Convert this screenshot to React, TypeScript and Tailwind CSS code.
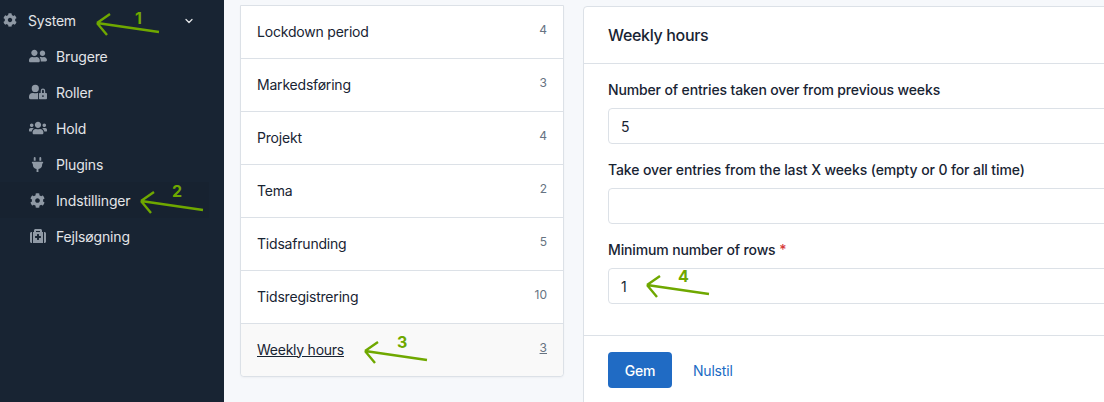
import React from "react";
import { FaCog, FaUserFriends, FaUserLock, FaUsers, FaPlug, FaMedkit } from "react-icons/fa";
import { ChevronDown } from "lucide-react";

function Arrow({ x, y, n, nx, ny }: { x: number; y: number; n: string; nx: number; ny: number }) {
  return (
    <>
      <svg className="absolute pointer-events-none" style={{ left: x, top: y }} width="68" height="30" viewBox="0 0 68 30" fill="none">
        <path d="M2 12 L64 21 M2 12 L15 3 M2 12 L12 24" stroke="#6fa800" strokeWidth="2.4" />
      </svg>
      <span className="absolute pointer-events-none text-[16px] leading-none font-bold text-[#6fa800]" style={{ left: nx, top: ny }}>{n}</span>
    </>
  );
}

const sub = [
  { label: "Brugere", Icon: FaUserFriends, size: 18 },
  { label: "Roller", Icon: FaUserLock, size: 18 },
  { label: "Hold", Icon: FaUsers, size: 18 },
  { label: "Plugins", Icon: FaPlug, size: 15 },
  { label: "Indstillinger", Icon: FaCog, size: 15, active: true },
  { label: "Fejlsøgning", Icon: FaMedkit, size: 16 },
];

const rows: [string, string][] = [
  ["Lockdown period", "4"],
  ["Markedsføring", "3"],
  ["Projekt", "4"],
  ["Tema", "2"],
  ["Tidsafrunding", "5"],
  ["Tidsregistrering", "10"],
];

export default function App() {
  return (
    <div className="relative flex h-[402px] w-[1104px] overflow-hidden bg-[#f6f8fb] text-[14px] tracking-[-0.2px] text-[#182433] font-['Inter',sans-serif]">
      <aside className="w-[224px] shrink-0 bg-[#182433] pt-[2px] text-[#e3e5e8]">
        <div className="flex h-[36px] items-center pl-[3px]">
          <FaCog className="w-[14px] h-[14px] text-[#8f99a5]" />
          <span className="ml-[11px] w-[48px]">System</span>
          <ChevronDown className="ml-[107px] mt-[1px] w-[12px] h-[12px]" strokeWidth={2.5} />
        </div>
        {sub.map(({ label, Icon, size, active }) => (
          <div key={label} className={`flex h-[36px] w-[209px] items-center ${active ? "bg-[#172230]" : ""}`}>
            <span className="ml-[28px] flex w-[28px] justify-start">
              <span className="flex w-[19px] justify-center">
                <Icon className="text-[#8f99a5]" style={{ width: size, height: size }} />
              </span>
            </span>
            <span className="tracking-[-0.15px]">{label}</span>
          </div>
        ))}
      </aside>

      <main className="flex flex-1 gap-[19px] pl-[16px]">
        <section className="mt-[5px] h-[372px] w-[324px] shrink-0 rounded-b-[4px] border border-[#dce1e7] bg-white shadow-[0_1px_2px_rgba(24,36,51,0.04)]">
          {rows.map(([name, count]) => (
            <div key={name} className="flex h-[53px] items-center justify-between border-b border-[#dce1e7] pb-[2px] pl-[16px] pr-[16px]">
              <span>{name}</span>
              <span className="text-[12px] text-[#667382] tracking-normal -translate-y-[1px]">{count}</span>
            </div>
          ))}
          <div className="flex h-[52px] items-center justify-between rounded-b-[4px] bg-[#f9f9f9] pb-[2px] px-[16px]">
            <span className="underline tracking-[-0.25px]">Weekly hours</span>
            <span className="text-[12px] text-[#667382] tracking-normal underline -translate-y-[1px]">3</span>
          </div>
        </section>

        <section className="mt-[6px] flex h-[420px] w-[540px] shrink-0 flex-col rounded-l-[4px] border border-[#dce1e7] bg-white">
          <div className="flex h-[57px] shrink-0 items-center border-b border-[#dce1e7] px-[24px] text-[16px] font-medium tracking-[-0.33px] leading-none">
            Weekly hours
          </div>
          <div className="flex h-[272px] shrink-0 flex-col border-b border-[#dce1e7] px-[24px] pt-[16px]">
            <label className="mb-[8px] h-[20px] font-medium tracking-[-0.14px] leading-[20px]">Number of entries taken over from previous weeks</label>
            <input readOnly value="5" className="mb-[16px] h-[36px] w-[560px] shrink-0 rounded-[4px] border border-[#dce1e7] bg-white px-[12px] text-[14px] outline-none" />
            <label className="mb-[8px] h-[20px] font-medium tracking-[-0.11px] leading-[20px]">Take over entries from the last X weeks (empty or 0 for all time)</label>
            <input readOnly value="" className="mb-[16px] h-[36px] w-[560px] shrink-0 rounded-[4px] border border-[#dce1e7] bg-white px-[12px] text-[14px] outline-none" />
            <label className="mb-[8px] h-[20px] font-medium tracking-[-0.14px] leading-[20px]">Minimum number of rows <span className="text-[#d63939]">*</span></label>
            <input readOnly value="1" className="h-[36px] w-[560px] shrink-0 rounded-[4px] border border-[#dce1e7] bg-white px-[12px] text-[14px] outline-none" />
          </div>
          <div className="flex items-center px-[24px] pt-[16px]">
            <button className="h-[36px] w-[64px] rounded-[4px] bg-[#206bc4] font-medium text-white">Gem</button>
            <a className="ml-[21px] text-[#206bc4]">Nulstil</a>
          </div>
        </section>
      </main>

      <Arrow x={95} y={11} n="1" nx={135} ny={10} />
      <Arrow x={139} y={189} n="2" nx={172} ny={183} />
      <Arrow x={363} y={339} n="3" nx={397} ny={334} />
      <Arrow x={645} y={273} n="4" nx={678} ny={268} />
    </div>
  );
}
